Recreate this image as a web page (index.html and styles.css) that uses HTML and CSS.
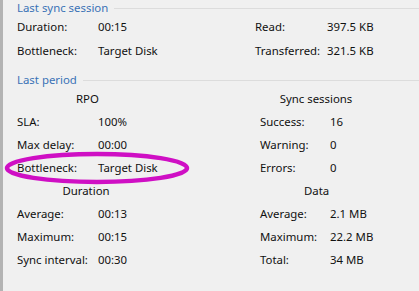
FILE: index.html
```html
<!DOCTYPE html>
<html>
<head>
  <meta charset="UTF-8">
  <title>Sync statistics</title>
  <link rel="stylesheet" href="styles.css">
</head>
<body>
<div class="panel">

  <div class="group">
    <div class="group-title"><span>Last sync session</span><i class="rule"></i></div>
    <div class="session">
      <span>Duration:</span><span>00:15</span>
      <span>Read:</span><span>397.5 KB</span>
      <span>Bottleneck:</span><span>Target Disk</span>
      <span>Transferred:</span><span>321.5 KB</span>
    </div>
  </div>

  <div class="group group-period">
    <div class="group-title"><span>Last period</span><i class="rule"></i></div>
    <div class="period">
      <div class="block block-left">
        <div class="block-head">RPO</div>
        <span>SLA:</span><span>100%</span>
        <span>Max delay:</span><span>00:00</span>
        <span>Bottleneck:</span><span>Target Disk</span>
      </div>
      <div class="block block-right">
        <div class="block-head">Sync sessions</div>
        <span>Success:</span><span>16</span>
        <span>Warning:</span><span>0</span>
        <span>Errors:</span><span>0</span>
      </div>
      <div class="block block-left">
        <div class="block-head">Duration</div>
        <span>Average:</span><span>00:13</span>
        <span>Maximum:</span><span>00:15</span>
        <span>Sync interval:</span><span>00:30</span>
      </div>
      <div class="block block-right">
        <div class="block-head">Data</div>
        <span>Average:</span><span>2.1 MB</span>
        <span>Maximum:</span><span>22.2 MB</span>
        <span>Total:</span><span>34 MB</span>
      </div>
    </div>
  </div>

</div>

<svg class="mark" width="200" height="40" viewBox="0 0 200 40">
  <ellipse cx="97" cy="20" rx="90" ry="14" fill="none" stroke="#cf0fc4" stroke-width="4.5"/>
</svg>
</body>
</html>
```

FILE: styles.css
```css
html, body {
	margin: 0;
	padding: 0;
}
body {
	background: #f0f0f0;
	font-family: "Segoe UI", "Noto Sans", "Liberation Sans", sans-serif;
	font-size: 11.4px;
	color: #111;
	width: 419px;
	height: 291px;
	overflow: hidden;
	position: relative;
}
.panel {
	border-left: 3px solid #b3b3b3;
	height: 291px;
	box-sizing: border-box;
	padding-left: 14px;
}
.group-title {
	display: flex;
	align-items: center;
	height: 14px;
	line-height: 14px;
	padding-top: 1px;
	margin-bottom: -1px;
	color: #3a72b6;
}
.group-title .rule {
	flex: 1;
	border-top: 1px solid #dcdcdc;
	margin-left: 6px;
}
.session {
	display: grid;
	grid-template-columns: 81px 157px 72px auto;
	grid-auto-rows: 24px;
	align-items: center;
	white-space: nowrap;
}
.group-period {
	margin-top: 10px;
}
.period {
	display: grid;
	grid-template-columns: 138px 112px;
	column-gap: 105px;
	margin-top: 1px;
}
.block {
	display: grid;
	grid-auto-rows: 23px;
	align-items: center;
	white-space: nowrap;
}
.block-left {
	grid-template-columns: 81px 1fr;
}
.block-right {
	grid-template-columns: 70px 1fr;
}
.block-head {
	grid-column: 1 / -1;
	text-align: center;
}
.mark {
	position: absolute;
	left: 0;
	top: 148px;
}
```
